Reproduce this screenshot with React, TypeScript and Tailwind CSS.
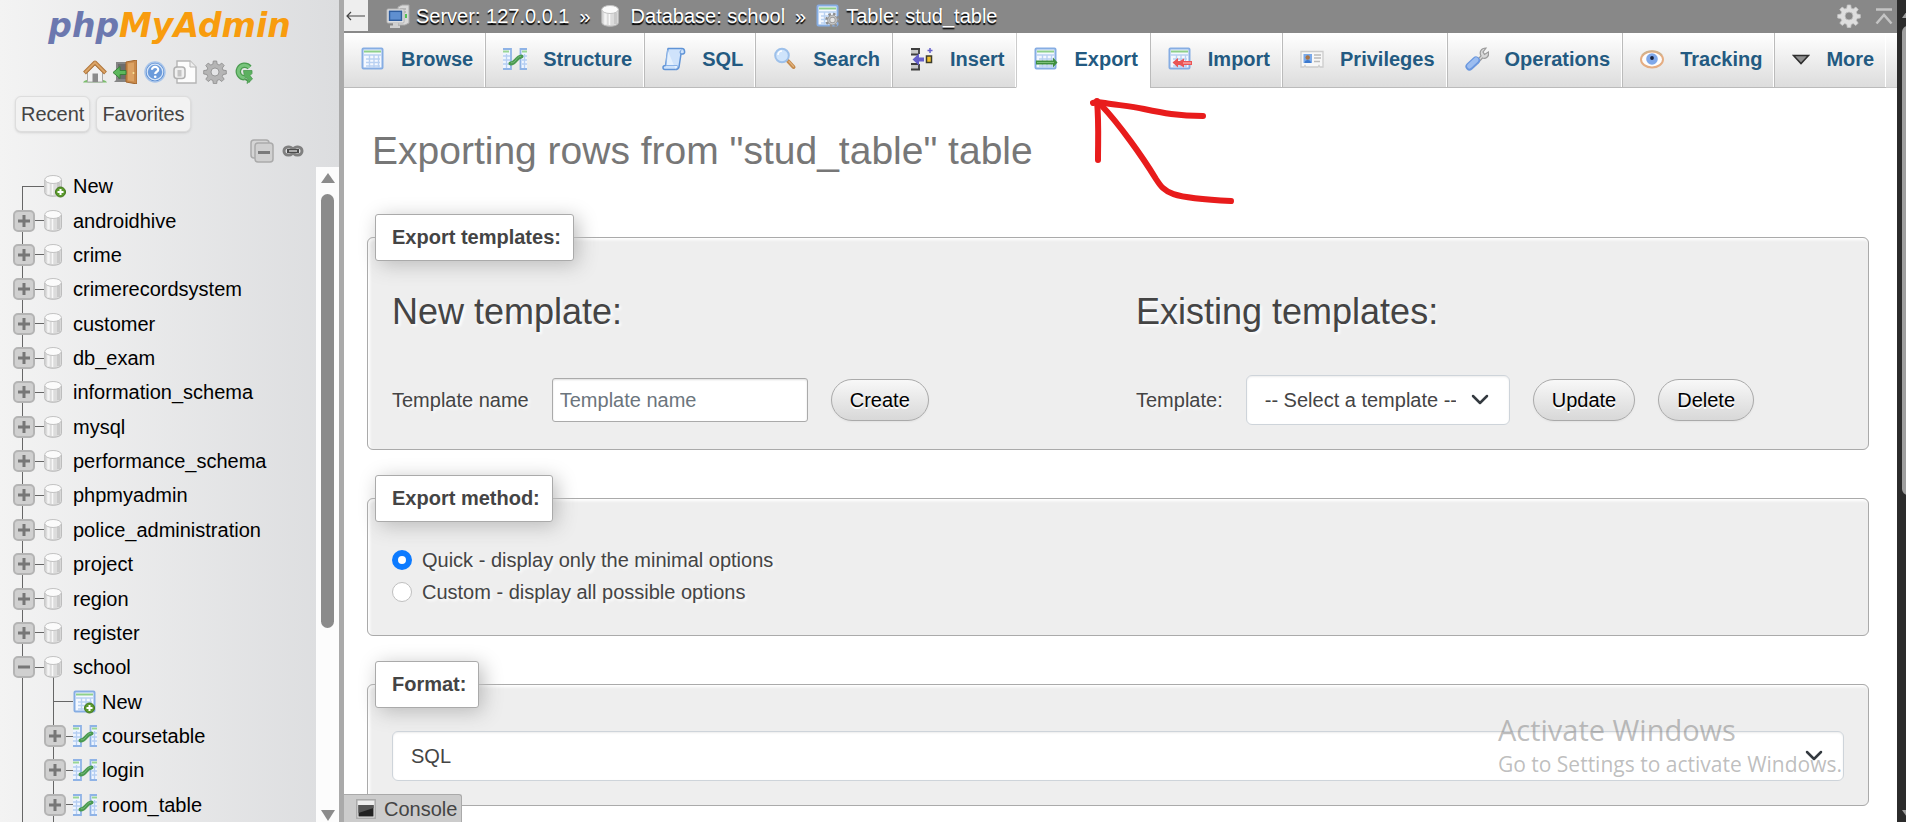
import type { ReactNode } from "react";

const svg = (size: string, children: ReactNode, box = "0 0 24 24") => (
  <svg viewBox={box} className={`${size} shrink-0`} aria-hidden="true">
    {children}
  </svg>
);

const S24 = "w-6 h-6";

const TableBase = () => (
  <>
    <rect x="1.5" y="1.5" width="20" height="20" rx="1" fill="#f4f8ff" stroke="#86ade3" strokeWidth="2" />
    <path d="M3 4.5h17" stroke="#8fd08a" strokeWidth="2" />
    <path d="M3 8h17M5 12h14M5 15.5h14M5 19h14M8.500 8v13M13 8v13M17.500 8v13" stroke="#b9d1f2" strokeWidth="1.400" fill="none" />
  </>
);

const BrowseIcon = () => svg(S24, <TableBase />);
const StructureIcon = () =>
  svg(
    S24,
    <>
      <path d="M0 2h8v20H0z" fill="#eef5ff" />
      <path d="M17 2h7v20h-7z" fill="#eef5ff" />
      <path d="M0 2h8v20H0M24 2h-6.500v20H24" fill="none" stroke="#8fb3e6" strokeWidth="1.800" />
      <path d="M0 4.500h6M19 4.500h5" stroke="#9ad694" strokeWidth="1.800" />
      <path d="M0 9h7M0 13h7M0 17h7M19 9h5M19 13h5M19 17h5M3.500 7v14M21.500 7v14" stroke="#b5cef2" strokeWidth="1.300" />
      <path d="M7.500 16.500c5 .5 5.500-6.500 11-7" fill="none" stroke="#4a9a50" strokeWidth="4" strokeLinecap="round" />
      <path d="M8 15.800c5 .5 5.500-6.500 10-6.500" fill="none" stroke="#74b978" strokeWidth="1" />
    </>,
  );
const SqlIcon = () =>
  svg(
    S24,
    <>
      <path d="M6 1.500h14c3 0 3.500 5 1 5.500h-2l-2 13c-.5 2-2 2.500-4 2.500H3c-2.500 0-3-4 .5-4z" fill="#cfe3fb" stroke="#5f93d6" strokeWidth="1.500" strokeLinejoin="round" />
      <path d="M5.500 3 4 18.500h11c1.500 0 .5 3.500-1.500 3.500" fill="#e4f0fd" stroke="#8ab3e8" strokeWidth="1" />
      <path d="M19 7c-1.500 0-1-4 .5-4" fill="none" stroke="#5f93d6" />
    </>,
  );
const SearchIcon = () =>
  svg(
    S24,
    <>
      <path d="m15 14 5.500 6" stroke="#c48a4c" strokeWidth="4" strokeLinecap="round" />
      <path d="m16 14.500 4.500 5" stroke="#e2b37d" strokeWidth="1.200" strokeLinecap="round" />
      <circle cx="9" cy="8.500" r="6.800" fill="#cfe4fb" stroke="#9dc0ea" strokeWidth="2" />
      <path d="M5 8a4 4 0 0 1 4-4" fill="none" stroke="#fff" strokeWidth="1.500" />
    </>,
  );
const InsertIcon = () =>
  svg(
    S24,
    <>
      <path d="M1 2h8v5H1zM1 17h8v6H1z" fill="#c9c9c9" />
      <path d="M1 2h9M1 7.500h8M1 17h8M1 22.500h9M9 1v6M9 17v6" stroke="#3f3f3f" strokeWidth="1.800" />
      <path d="m2.500 12.500 6.500-6v4h5v4H9v4z" fill="#655fcb" />
      <path d="M16.500 9h5v6.500h-5z" fill="#f2c12e" stroke="#3c3c2c" strokeWidth="1.500" />
      <path d="M20 1v5M17.500 3.500h5" stroke="#655fcb" strokeWidth="1.500" />
    </>,
  );
const ExportIcon = () =>
  svg(
    S24,
    <>
      <TableBase />
      <path d="M2 13.500h17v-3l4.500 5-4.500 5v-3H2z" fill="#3f8f3f" />
      <path d="M3 15.500h17" stroke="#7cc07a" />
    </>,
  );
const ImportIcon = () =>
  svg(
    S24,
    <>
      <TableBase />
      <path d="m4.500 15.500 5.500-4.500v3h2l4-2.500v2.500h8v4h-8v2.500L12 18h-2v2.500z" fill="#ea5555" />
      <path d="M15 16h8" stroke="#ffb5b5" strokeWidth="1.200" />
    </>,
  );
const PrivilegesIcon = () =>
  svg(
    S24,
    <>
      <path d="M1 4.500h22v15.500h-3l-1-1.500-1 1.500H6l-1-1.500L4 20H1z" fill="#f7f7f7" stroke="#cccccc" strokeWidth="1.300" />
      <rect x="3.500" y="7" width="8.500" height="9" fill="#79a9ea" />
      <circle cx="7.700" cy="10.500" r="2.200" fill="#a87447" />
      <path d="M4.500 16c0-4 6.500-4 6.500 0" fill="#3b78cd" />
      <path d="M14 8h7M14 11h7M14 14.500h6" stroke="#bbb" strokeWidth="1.400" />
    </>,
  );
const OperationsIcon = () =>
  svg(
    S24,
    <>
      <path d="m11 14 5-5c-2-4 0-8 5-8l-3 4 1.500 2.500L23.500 5c1 5-3 7-6 6l-4.500 5z" fill="#d8d8d8" stroke="#9a9a9a" strokeWidth="1.200" />
      <path d="M4.500 19.500 11 13.500" stroke="#6a97de" strokeWidth="8" strokeLinecap="round" />
      <path d="M4.500 19 11 13" stroke="#9cbdf0" strokeWidth="5" strokeLinecap="round" />
    </>,
  );
const TrackingIcon = () =>
  svg(
    S24,
    <>
      <ellipse cx="12" cy="12.500" rx="11" ry="8" fill="#fdfdfd" stroke="#e5ad82" strokeWidth="2" />
      <path d="M2 8c5-5.500 15-5.500 20 0" fill="none" stroke="#cfb38f" strokeWidth="1.500" />
      <circle cx="12" cy="12" r="5.800" fill="#7fa8ea" />
      <circle cx="12" cy="11" r="1.900" fill="#16203c" />
    </>,
  );
const MoreIcon = () =>
  svg("w-[18px] h-6", <path d="M4.500 8.500h15l-7.500 8z" fill="#8f8f8f" stroke="#2e2e2e" strokeWidth="1.600" />, "3 0 18 24");

const gearPath =
  "M10.300 1h3.400l.5 3.200 2 .8 2.600-1.900 2.400 2.400-1.900 2.600.8 2 3.200.5v3.400l-3.200.5-.8 2 1.900 2.600-2.400 2.400-2.600-1.900-2 .8-.5 3.200h-3.400l-.5-3.200-2-.8-2.600 1.900-2.400-2.400 1.900-2.600-.8-2L.7 14v-3.400l3.200-.5.8-2L2.800 5.500l2.400-2.400L7.800 5l2-.8zM12 8a4 4 0 1 0 0 8 4 4 0 0 0 0-8z";

const Gear = ({ fill, stroke }: { fill: string; stroke: string }) =>
  svg(S24, <path d={gearPath} fill={fill} stroke={stroke} strokeWidth=".8" fillRule="evenodd" />);

const HomeIcon = () =>
  svg(
    S24,
    <>
      <path d="M0 22.500c3-5 21-5 24 0z" fill="#7bbd6c" />
      <path d="M4.500 12 12 5l7.500 7v10h-15z" fill="#f1f1f1" stroke="#a9a9a9" />
      <path d="M9.500 13.500h5.500V22H9.500z" fill="#8b8b8b" />
      <path d="m1.500 13 10.500-10.500 10.500 10.500" fill="none" stroke="#b0753a" strokeWidth="4" strokeLinejoin="round" />
      <path d="M2 12.500 12 2.500l10 10" fill="none" stroke="#dba466" strokeWidth="2" />
    </>,
  );
const ExitIcon = () =>
  svg(
    S24,
    <>
      <path d="M3 2h12v20H1l2-2z" fill="#858585" />
      <path d="M5 4h9v15H5z" fill="#6d6d6d" />
      <path d="m13 2 11-2v24l-11-2z" fill="#c98a4b" stroke="#a0652c" />
      <path d="m15 3.500 6-1v19l-6-1z" fill="#dca263" />
      <circle cx="20.500" cy="13" r="1" fill="#f9e39b" />
      <path d="m0 12.500 7-6v4h6v4H7v4z" fill="#5cb85c" stroke="#38803a" />
    </>,
  );
const HelpIcon = () =>
  svg(
    S24,
    <>
      <circle cx="12" cy="12" r="10" fill="#5d8fd3" stroke="#a9c5ea" strokeWidth="1.500" />
      <circle cx="12" cy="12" r="7.800" fill="#6c9bdb" stroke="#d8e6f8" strokeWidth="1.200" />
      <path d="M9 9.800c0-4 6.500-3.600 6.200 0-.2 2-3 2-3 4.200" fill="none" stroke="#fff" strokeWidth="2.200" />
      <circle cx="12.200" cy="16.800" r="1.300" fill="#fff" />
    </>,
  );
const DocsIcon = () =>
  svg(
    S24,
    <>
      <path d="M4 1h13l6 6v16H4z" fill="#fcfcfc" stroke="#b5b5b5" strokeWidth="1.400" />
      <path d="M17 1v6h6" fill="#eee" stroke="#b5b5b5" />
      <rect x="1" y="7" width="11" height="11.500" rx="3" fill="#f0f0f0" stroke="#b0b0b0" strokeWidth="1.500" />
      <path d="M4.500 10h4v6.500h-4z" fill="#c4c4c4" />
    </>,
  );
const ReloadIcon = () =>
  svg(
    S24,
    <>
      <path d="M16.500 7.500a6.300 6.300 0 1 0-5 10.300" fill="none" stroke="#4b9b50" strokeWidth="5.400" />
      <path d="M11 18.500 17 22" stroke="#4b9b50" strokeWidth="2" />
      <path d="M10.500 10.500h8.500v3l-2 2 2.500 3.500-5.500 4.500 1-4.500-3.500-2z" fill="#5cb060" stroke="#4b9b50" strokeWidth=".8" />
      <path d="M16.500 7.500a6.300 6.300 0 1 0-5 10.300" fill="none" stroke="#78c47c" strokeWidth="3" />
    </>,
  );
const PlusBadge = () => (
  <>
    <circle cx="16.500" cy="18" r="5" fill="#5b9a2c" stroke="#42761c" />
    <path d="M16.500 15v6M13.500 18h6" stroke="#fff" strokeWidth="2" />
  </>
);
const DbIcon = ({ plus = false }: { plus?: boolean }) =>
  svg(
    S24,
    <>
      <path d="M.8 6v12.500c0 5 16.600 5 16.600 0V6z" fill="#dcdcdc" stroke="#b8b8b8" />
      <path d="M4.500 9v11.500" stroke="#f4f4f4" strokeWidth="2.500" />
      <path d="M8.500 10v11" stroke="#f8f8f8" strokeWidth="1.500" />
      <path d="M14.500 9v11" stroke="#c9c9c9" strokeWidth="3" />
      <ellipse cx="9.100" cy="5.500" rx="8.300" ry="4" fill="#fbfbfb" stroke="#c2c2c2" />
      {plus && <PlusBadge />}
    </>,
  );
const TableNewIcon = () =>
  svg(
    S24,
    <>
      <TableBase />
      <PlusBadge />
    </>,
  );
const TableGearIcon = () =>
  svg(
    S24,
    <>
      <TableBase />
      <circle cx="16.500" cy="16" r="6" fill="none" stroke="#8e8e8e" strokeWidth="2.500" strokeDasharray="2.400 2.300" />
      <circle cx="16.500" cy="16" r="3.800" fill="#e4e4e4" stroke="#9c9c9c" strokeWidth="3" />
      <circle cx="16.500" cy="16" r="3.800" fill="none" stroke="#c9c9c9" strokeWidth="1.200" />
    </>,
  );
const ServerIcon = () =>
  svg(
    S24,
    <>
      <path d="m12 3 4-2h7v18l-4 2h-7z" fill="#d9d9d9" stroke="#aaa" />
      <path d="M14 5h6M14 8h6" stroke="#999" />
      <path d="M20 10v4" stroke="#54c254" strokeWidth="2" />
      <rect x="1" y="5" width="17" height="14" rx="1" fill="#e5e5e5" stroke="#b3b3b3" />
      <rect x="3.500" y="7.300" width="12" height="9" fill="#5f8fd0" stroke="#2f5d9e" strokeWidth="1.500" />
      <path d="M7 19h5v3H7zM4 21.500h10V24H4z" fill="#d0d0d0" />
    </>,
  );

const Toggle = ({ open = false }: { open?: boolean }) => (
  <button type="button" aria-label={open ? "Collapse" : "Expand"} className="relative block h-[22px] w-[22px] shrink-0 rounded-[5px] border-2 border-[#b4b4b4] bg-[#d0d0d0]">
    <svg viewBox="0 0 18 18" className="block h-[18px] w-[18px]">
      <path d={open ? "M3 9h12" : "M3 9h12M9 3v12"} stroke="#777" strokeWidth="3" />
    </svg>
  </button>
);

type Node = { name: string; kind: "newdb" | "db" | "open" | "newtable" | "table" };
const nodes: Node[] = [
  { name: "New", kind: "newdb" },
  { name: "androidhive", kind: "db" },
  { name: "crime", kind: "db" },
  { name: "crimerecordsystem", kind: "db" },
  { name: "customer", kind: "db" },
  { name: "db_exam", kind: "db" },
  { name: "information_schema", kind: "db" },
  { name: "mysql", kind: "db" },
  { name: "performance_schema", kind: "db" },
  { name: "phpmyadmin", kind: "db" },
  { name: "police_administration", kind: "db" },
  { name: "project", kind: "db" },
  { name: "region", kind: "db" },
  { name: "register", kind: "db" },
  { name: "school", kind: "open" },
  { name: "New", kind: "newtable" },
  { name: "coursetable", kind: "table" },
  { name: "login", kind: "table" },
  { name: "room_table", kind: "table" },
];

const Cell = ({ line, narrow = false, children }: { line: "full" | "bottom"; narrow?: boolean; children?: ReactNode }) => (
  <span className={narrow ? "relative flex w-[29px] shrink-0 items-center self-stretch" : "relative flex w-[31px] shrink-0 items-center self-stretch"}>
    {line === "full" && <span className="absolute inset-y-0 left-[9px] w-px bg-[#666]" />}
    {line === "bottom" && <span className="absolute top-1/2 bottom-0 left-[9px] w-px bg-[#666]" />}
    {children}
  </span>
);
const Dash = ({ from }: { from: "node" | "toggle" }) => (
  <span className={from === "node" ? "absolute right-0 left-[9px] h-px bg-[#666]" : "absolute right-0 left-[22px] h-px bg-[#666]"} />
);

const TreeRow = ({ node }: { node: Node }) => {
  const isTable = node.kind === "newtable" || node.kind === "table";
  return (
    <li className="flex min-h-0 items-center pl-[13px]">
      {isTable && <Cell line="full" />}
      <Cell line={node.kind === "newdb" ? "bottom" : "full"} narrow={isTable}>
        {node.kind === "newdb" || node.kind === "newtable" ? (
          <Dash from="node" />
        ) : (
          <>
            <Dash from="toggle" />
            <Toggle open={node.kind === "open"} />
          </>
        )}
      </Cell>
      <a href="#" className="relative flex items-center gap-[5px] self-stretch text-black">
        {node.kind === "open" && <span className="absolute top-1/2 bottom-0 left-[9px] w-px bg-[#666]" />}
        <span className="relative">
          {node.kind === "newdb" && <DbIcon plus />}
          {(node.kind === "db" || node.kind === "open") && <DbIcon />}
          {node.kind === "newtable" && <TableNewIcon />}
          {node.kind === "table" && <StructureIcon />}
        </span>
        {node.name}
      </a>
    </li>
  );
};

const Sidebar = () => (
  <aside className="flex w-[344px] shrink-0 flex-col border-r-[5px] border-[#aaa] bg-linear-to-r from-[#f3f3f3] to-[#dcdddf]">
    <a href="#" className="flex h-12 justify-center pt-1 font-['DejaVu_Sans',sans-serif] text-[33px] leading-[44px] font-bold text-[#6c78af] italic">
      <span>
        php<span className="text-[#f89c0e]">MyAdmin</span>
      </span>
    </a>
    <nav aria-label="Shortcuts" className="mt-3 flex justify-center gap-1.5">
      <a href="#" aria-label="Home"><HomeIcon /></a>
      <a href="#" aria-label="Log out"><ExitIcon /></a>
      <a href="#" aria-label="Documentation"><HelpIcon /></a>
      <a href="#" aria-label="MySQL documentation"><DocsIcon /></a>
      <a href="#" aria-label="Settings"><Gear fill="#b5b5b5" stroke="#8a8a8a" /></a>
      <a href="#" aria-label="Reload"><ReloadIcon /></a>
    </nav>
    <div className="mt-3 flex gap-1.5 pl-[15px] text-[#444]">
      <button type="button" className="h-9 rounded-md border border-[#ddd] bg-[#f2f2f2] px-[5px] shadow-sm">Recent</button>
      <button type="button" className="h-9 rounded-md border border-[#ddd] bg-[#f2f2f2] px-[5px] shadow-sm">Favorites</button>
    </div>
    <div className="mt-[7px] flex h-6 items-center justify-end gap-2 pr-[35px]">
      <button type="button" aria-label="Collapse all">
        <svg viewBox="0 0 24 24" className="block h-6 w-6">
          <rect x="1" y="1" width="18" height="18" rx="3" fill="#d5d5d5" stroke="#aaa" strokeWidth="1.500" />
          <rect x="5" y="4" width="18" height="19" rx="3" fill="#d0d0d0" stroke="#aaa" strokeWidth="1.500" />
          <path d="M8 13.500h12" stroke="#7a7a7a" strokeWidth="3" />
        </svg>
      </button>
      <button type="button" aria-label="Unlink from main panel">
        <svg viewBox="0 0 22 14" className="block h-3.5 w-[22px]" fill="none">
          <rect x="2" y="3" width="9" height="8" rx="4" stroke="#808080" strokeWidth="3" />
          <rect x="11" y="3" width="9" height="8" rx="4" stroke="#808080" strokeWidth="3" />
          <path d="M5 7h12" stroke="#4c4c4c" strokeWidth="4" />
          <path d="M7 7h8" stroke="#ccc" strokeWidth="1.500" />
        </svg>
      </button>
    </div>
    <div className="mt-1 flex min-h-0 flex-1">
      <ul className="grid flex-1 auto-rows-fr pt-0.5">
        {nodes.map((n, i) => (
          <TreeRow key={i} node={n} />
        ))}
      </ul>
      <div className="flex w-[23px] flex-col items-center justify-between bg-[#fcfcfc] pt-1.5 pb-px">
        <svg viewBox="0 0 14 11" className="h-[11px] w-3.5"><path d="M7 0 14 10H0z" fill="#8b8b8b" /></svg>
        <div className="mt-2.5 mb-auto h-[67%] w-[13px] rounded-full bg-[#8b8b8b]" />
        <svg viewBox="0 0 14 11" className="h-[11px] w-3.5"><path d="M0 0h14L7 11z" fill="#8b8b8b" /></svg>
      </div>
    </div>
  </aside>
);

const tabs: { label: string; icon: ReactNode; active?: boolean }[] = [
  { label: "Browse", icon: <BrowseIcon /> },
  { label: "Structure", icon: <StructureIcon /> },
  { label: "SQL", icon: <SqlIcon /> },
  { label: "Search", icon: <SearchIcon /> },
  { label: "Insert", icon: <InsertIcon /> },
  { label: "Export", icon: <ExportIcon />, active: true },
  { label: "Import", icon: <ImportIcon /> },
  { label: "Privileges", icon: <PrivilegesIcon /> },
  { label: "Operations", icon: <OperationsIcon /> },
  { label: "Tracking", icon: <TrackingIcon /> },
  { label: "More", icon: <MoreIcon /> },
];

const Header = () => (
  <header>
    <div className="flex h-[33px] bg-[#888] text-white [text-shadow:0_2px_1px_#000]">
      <button type="button" aria-label="Hide panel" className="flex h-[31px] w-6 items-center justify-center bg-[#eee]">
        <svg viewBox="0 0 20 10" className="h-2.5 w-5" fill="none" stroke="#444" strokeWidth="1.200">
          <path d="M19 5H1M5 1 1 5l4 4" />
        </svg>
      </button>
      <nav aria-label="Breadcrumb" className="flex h-8 items-center pl-[18px]">
        <a href="#" className="flex items-center gap-1.5"><ServerIcon />Server: 127.0.0.1</a>
        <span className="px-2.5">»</span>
        <a href="#" className="flex items-center gap-1.5"><DbIcon />Database: school</a>
        <span className="px-2.5">»</span>
        <a href="#" className="flex items-center gap-1.5"><TableGearIcon />Table: stud_table</a>
      </nav>
      <div className="ml-auto flex h-8 items-center gap-3.5 pr-1">
        <button type="button" aria-label="Page settings"><Gear fill="#dedede" stroke="#c4c4c4" /></button>
        <button type="button" aria-label="Back to top">
          <svg viewBox="0 0 18 18" className="block h-[18px] w-[18px]" fill="none" stroke="#c4c4c4" strokeWidth="2.500">
            <path d="M1 2.500h16M1.500 16.500 9 8l7.500 8.500" />
          </svg>
        </button>
      </div>
    </div>
    <nav aria-label="Table actions" className="flex h-[55px] bg-linear-to-b from-white to-[#dcdcdc] font-bold text-[#235a81]">
      {tabs.map((t) => (
        <a
          key={t.label}
          href="#"
          className={
            t.active
              ? "flex items-center gap-4 border-b border-l border-b-white border-l-[#ccc] bg-white pr-[12px] pb-0.5 pl-[17px]"
              : "flex items-center gap-4 border-b border-l border-[#bbb] pr-[12px] pb-0.5 pl-[17px] shadow-[inset_-1px_0_0_#fff] first:border-l-0"
          }
        >
          {t.icon}
          {t.label}
        </a>
      ))}
      <span className="flex-1 border-b border-[#ccc]" />
    </nav>
  </header>
);

const Panel = ({ title, className, children }: { title: string; className: string; children: ReactNode }) => (
  <fieldset className="min-w-0 rounded-md border border-[#aaa] bg-[#eee] px-6 text-[#444] shadow-[inset_2px_2px_3px_#fff] [text-shadow:2px_2px_3px_#fff]">
    <legend className="-ml-[17px] h-[47px] rounded-[3px] border border-[#aaa] bg-white pr-3 pl-4 leading-[45px] font-bold shadow-[4px_4px_20px_#bbb]">
      {title}
    </legend>
    <div className={className}>{children}</div>
  </fieldset>
);

const Pill = ({ children }: { children: ReactNode }) => (
  <button type="button" className="h-[42px] rounded-full border border-[#aaa] bg-linear-to-b from-[#f8f8f8] to-[#d8d8d8] px-[18px] text-black shadow-xs [text-shadow:0_2px_0_#fff]">
    {children}
  </button>
);

const Chevron = () => (
  <svg viewBox="0 0 18 12" className="pointer-events-none absolute top-1/2 right-[21px] h-3 w-[18px] -translate-y-1/2" fill="none">
    <path d="m2 2 7 7 7-7" stroke="#343a40" strokeWidth="2.500" strokeLinecap="round" strokeLinejoin="round" />
  </svg>
);

const selectClass =
  "h-[50px] w-full appearance-none rounded-md border border-[#ced4da] bg-white pr-[53px] pl-[18px] text-[#444] shadow-[inset_0_1px_2px_rgba(0,0,0,0.075)]";
const radioClass =
  "h-5 w-5 shrink-0 appearance-none rounded-full border border-[#bfbfbf] bg-white checked:border-[6px] checked:border-[#0d7bff]";

const Annotation = () => (
  <svg viewBox="0 0 150 110" className="pointer-events-none absolute top-[97px] left-[743px] h-[110px] w-[150px]" fill="none" stroke="#e81c1c" strokeWidth="6" strokeLinecap="round" strokeLinejoin="round" aria-hidden="true">
    <path d="M6 6 10 5 18 6C29 8 44 9 57 12 76 16 91 19 116 19" />
    <path d="M10 4C12 26 11 42 11 63" />
    <path d="M15 9C32 27 55 59 69 82 78 96 82 101 144 104" />
  </svg>
);

export default function App() {
  return (
    <div className="relative flex h-screen overflow-hidden bg-white font-['Liberation_Sans',Arial,sans-serif] text-[20px] leading-[30px]">
      <Sidebar />
      <main className="relative flex min-w-0 flex-1 flex-col overflow-hidden">
        <Header />
        <h1 className="mt-[39px] ml-7 text-[39px] leading-[48px] text-[#777]">Exporting rows from "stud_table" table</h1>
        <form className="mt-[39px] mr-7 ml-[23px] flex flex-col gap-[25px]">
          <Panel title="Export templates:" className="grid grid-cols-[1fr_1fr] gap-x-9 pt-[29px] pb-6">
            <section>
              <h2 className="text-[36px] leading-[44px]">New template:</h2>
              <div className="mt-[41px] flex h-[50px] items-center gap-[23px]">
                <label htmlFor="template-name">Template name</label>
                <input id="template-name" type="text" placeholder="Template name" className="h-11 w-64 rounded-[3px] border border-[#aaa] bg-white px-[7px] shadow-[inset_0_1px_2px_#ddd] placeholder:text-[#6c757d]" />
                <Pill>Create</Pill>
              </div>
            </section>
            <section>
              <h2 className="text-[36px] leading-[44px]">Existing templates:</h2>
              <div className="mt-[41px] flex h-[50px] items-center gap-[23px]">
                <label htmlFor="template">Template:</label>
                <div className="relative w-[264px]">
                  <select id="template" className={selectClass}>
                    <option>-- Select a template --</option>
                  </select>
                  <Chevron />
                </div>
                <Pill>Update</Pill>
                <Pill>Delete</Pill>
              </div>
            </section>
          </Panel>
          <Panel title="Export method:" className="flex flex-col gap-0.5 pt-[23px] pb-7">
            <label className="flex items-center gap-2.5">
              <input type="radio" name="method" defaultChecked className={radioClass} />
              Quick - display only the minimal options
            </label>
            <label className="flex items-center gap-2.5">
              <input type="radio" name="method" className={radioClass} />
              Custom - display all possible options
            </label>
          </Panel>
          <Panel title="Format:" className="pt-[23px] pb-6">
            <div className="relative">
              <select aria-label="Format" className={selectClass}>
                <option>SQL</option>
              </select>
              <Chevron />
            </div>
          </Panel>
        </form>
        <Annotation />
        <button type="button" className="absolute bottom-0 left-0 flex h-7 items-center gap-2 rounded-tr-[3px] border-t border-r border-[#aaa] bg-[#ccc] pr-1 pl-3 text-[#444]">
          <svg viewBox="0 0 20 20" className="h-5 w-5">
            <rect x=".8" y=".8" width="18.400" height="18.400" fill="#eee" stroke="#aaa" strokeWidth="1.500" />
            <path d="M2.500 6h15v11.500h-15z" fill="#222" />
            <path d="M2.500 6h15v3l-15 5z" fill="#555" />
          </svg>
          Console
        </button>
      </main>
      <div className="flex w-[9px] shrink-0 flex-col overflow-hidden bg-[#2b2b2b] pl-[5px]">
        <svg viewBox="0 0 14 10" className="mt-2 h-2.5 w-3.5"><path d="M7 0 14 10H0z" fill="#9f9f9f" /></svg>
        <div className="mt-2 h-[57%] w-3 rounded-full bg-[#9f9f9f]" />
        <svg viewBox="0 0 14 10" className="mt-auto mb-0.5 h-2.5 w-3.5"><path d="M0 0h14L7 10z" fill="#9f9f9f" /></svg>
      </div>
      <div className="pointer-events-none absolute right-[64px] bottom-[42px] font-['Open_Sans','Noto_Sans',sans-serif] text-[#888]/55">
        <p className="text-[29px] leading-[36px]">Activate Windows</p>
        <p className="text-[21px] leading-[32px]">Go to Settings to activate Windows.</p>
      </div>
    </div>
  );
}
